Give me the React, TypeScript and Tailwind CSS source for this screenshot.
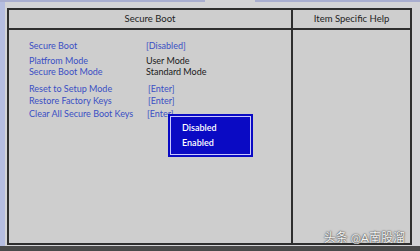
const ROWS = [
  { label: 'Secure Boot', value: '[Disabled]', blue: true, gap: '', indent: '' },
  { label: 'Platfrom Mode', value: 'User Mode', blue: false, gap: 'mt-[3px]', indent: '' },
  { label: 'Secure Boot Mode', value: 'Standard Mode', blue: false, gap: '-mt-[1px]', indent: '' },
  { label: 'Reset to Setup Mode', value: '[Enter]', blue: true, gap: 'mt-[5px]', indent: 'pl-[2px]' },
  { label: 'Restore Factory Keys', value: '[Enter]', blue: true, gap: '', indent: 'pl-[2px]' },
  { label: 'Clear All Secure Boot Keys', value: '[Enter]', blue: true, gap: 'mt-[1px]', indent: 'pl-[1px]' },
];

export default function App() {
  return (
    <div
      className="relative w-[420px] h-[251px] overflow-hidden bg-[#d3d3d6]"
      style={{ fontFamily: 'Lato, "Noto Sans", "Noto Sans CJK SC", sans-serif' }}
    >
      {/* window frame bits */}
      <div className="h-[2px] flex">
        <div className="w-[205px] bg-[#a9aed0]" />
        <div className="w-[50px]" />
        <div className="flex-1 bg-[#a9aed0]" />
      </div>
      <div className="flex h-[244px]">
        <div className="w-[5px] bg-[#b5bde0]" />
        <div className="w-[2px]" />
        {/* main BIOS panel */}
        <div className="mt-[6px] w-[405px] h-[237px] border-2 border-[#2e2e2e] bg-[#cecece] flex">
          <div className="w-[284px] border-r-2 border-[#2e2e2e] flex flex-col">
            <div className="h-[20px] border-b-2 border-[#2e2e2e] flex items-center justify-center text-[9.5px] text-[#1e1e1e]">
              Secure Boot
            </div>
            <div className="pl-[20px] pt-[10px] text-[9px] leading-[12px]">
              {ROWS.map((r) => (
                <div key={r.label} className={`flex ${r.gap}`}>
                  <span className="w-[117px] text-[#3a4fc4]">{r.label}</span>
                  <span className={`${r.indent} ${r.blue ? 'text-[#3a4fc4]' : 'text-[#1a1a1a]'}`}>{r.value}</span>
                </div>
              ))}
            </div>
          </div>
          <div className="flex-1 flex flex-col">
            <div className="h-[20px] border-b-2 border-[#2e2e2e] flex items-center justify-center text-[9.5px] text-[#1e1e1e]">
              Item Specific Help
            </div>
          </div>
        </div>
      </div>
      <div className="absolute left-0 right-0 bottom-0 h-[5px] bg-[#4a4a4a]" />

      {/* popup */}
      <div className="absolute left-[168px] top-[114px] w-[85px] h-[43px] bg-[#0a0ac4] p-[2px]">
        <div className="w-full h-full border border-[#c8c8ff] flex flex-col justify-center pl-[11px] gap-[3px] text-[9px] leading-[12px] font-semibold text-white">
          <span>Disabled</span>
          <span>Enabled</span>
        </div>
      </div>

      {/* watermark */}
      <div
        className="absolute right-[15px] top-[229px] text-[12px] text-[#f4f4f4]"
        style={{ textShadow: '0 0 1px #444, 0 0 2px #444' }}
      >
        头条 @A南股溜
      </div>
    </div>
  );
}
